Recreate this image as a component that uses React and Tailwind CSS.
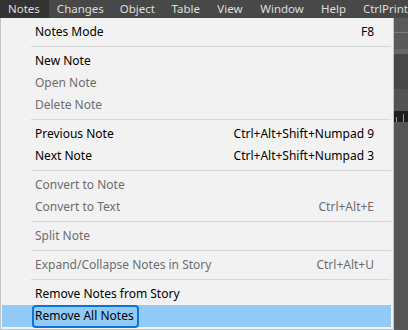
const menuBar = [
  { label: 'Notes', w: 'w-[49px]' },
  { label: 'Changes', w: 'w-[63px]' },
  { label: 'Object', w: 'w-[52px]' },
  { label: 'Table', w: 'w-[46px]' },
  { label: 'View', w: 'w-[43px]' },
  { label: 'Window', w: 'w-[61px]' },
  { label: 'Help', w: 'w-[42px]' },
  { label: 'CtrlPrint', w: 'flex-1' },
];

const items = [
  { label: 'Notes Mode', shortcut: 'F8' },
  { sep: true },
  { label: 'New Note' },
  { label: 'Open Note', disabled: true },
  { label: 'Delete Note', disabled: true },
  { sep: true },
  { label: 'Previous Note', shortcut: 'Ctrl+Alt+Shift+Numpad 9' },
  { label: 'Next Note', shortcut: 'Ctrl+Alt+Shift+Numpad 3' },
  { sep: true },
  { label: 'Convert to Note', disabled: true },
  { label: 'Convert to Text', shortcut: 'Ctrl+Alt+E', disabled: true },
  { sep: true },
  { label: 'Split Note', disabled: true },
  { sep: true },
  { label: 'Expand/Collapse Notes in Story', shortcut: 'Ctrl+Alt+U', disabled: true },
  { sep: true },
  { label: 'Remove Notes from Story' },
  { label: 'Remove All Notes', active: true },
];

function MenuRow({ item }) {
  if (item.sep) {
    return (
      <div className="h-[7px] flex items-center pl-[29px]">
        <div className="h-px w-full bg-[#d7d7d7]" />
      </div>
    );
  }
  const color = item.disabled ? 'text-[#6d6d6d]' : 'text-black';
  return (
    <div
      className={`h-[22px] flex items-center justify-between pl-[33px] pr-[17px] ${color} ${
        item.active ? 'bg-[#91c9f7]' : ''
      }`}
    >
      {item.active ? (
        <span className="-ml-[3px] h-[23px] flex items-center pl-[1px] pr-[3px] border-2 border-[#0b73d9] rounded-[4px]">
          {item.label}
        </span>
      ) : (
        <span>{item.label}</span>
      )}
      {item.shortcut && <span>{item.shortcut}</span>}
    </div>
  );
}

export default function App() {
  return (
    <div
      className="w-[408px] h-[330px] overflow-hidden flex flex-col bg-[#555555] text-[12px] leading-none"
      style={{ fontFamily: '"Noto Sans", "Segoe UI", sans-serif' }}
    >
      {/* menu bar */}
      <div className="h-[18px] flex bg-[#484848] text-[#dedede] text-[11.5px] whitespace-nowrap">
        {menuBar.map((m, i) => (
          <div
            key={m.label}
            className={`h-full flex items-center pl-[8px] ${m.w} ${i === 0 ? 'bg-[#333333]' : ''}`}
          >
            {m.label}
          </div>
        ))}
      </div>

      <div className="flex flex-1">
        {/* dropdown */}
        <div className="w-[394px] h-[312px] bg-[#f2f2f2] border border-t-0 border-[#c4c4c4] pt-[3px] pl-[1px] pr-[2px] whitespace-nowrap">
          {items.map((item, i) => (
            <MenuRow key={i} item={item} />
          ))}
        </div>

        {/* workspace behind the menu */}
        <div className="flex-1 flex flex-col">
          <div className="h-[14px] bg-[#5a5a5a]" />
          <div className="h-px bg-[#7c7c7c]" />
          <div className="h-[16px] bg-[#595959]" />
          <div className="h-[5px] bg-[#686868]" />
          <div className="h-[35px] bg-[#474747]" />
          <div className="h-[22px] bg-[#535353]" />
          <div className="h-[11px] bg-[#1f1f1f] flex items-end gap-[6px] pl-[2px]">
            <div className="w-px h-[5px] bg-[#9a9a9a]" />
            <div className="w-px h-[8px] bg-[#9a9a9a]" />
          </div>
          <div className="flex-1 bg-[#565656]" />
        </div>
      </div>
    </div>
  );
}
